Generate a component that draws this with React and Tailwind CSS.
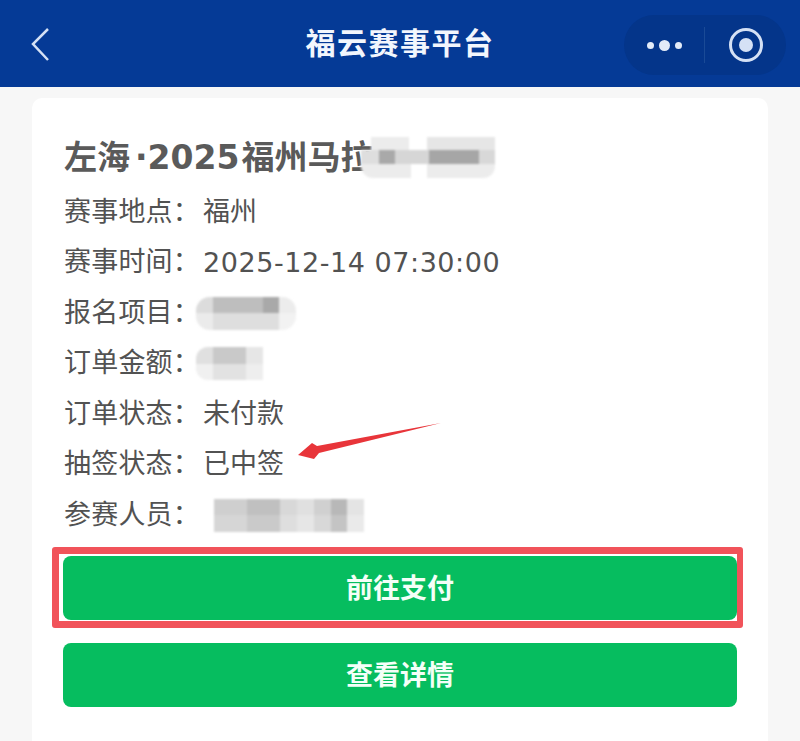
import React from 'react';

const fontStack = 'font-["Liberation_Sans","Noto_Sans_CJK_SC",sans-serif]';

// one mosaic cell of a blurred-out value
const Cell = ({ w, c }) => <div className="h-full" style={{ width: w, background: c }} />;

const Mosaic = ({ rows, className }) => (
  <div className={`flex flex-col overflow-hidden blur-[1px] ${className}`}>
    {rows.map((row, r) => (
      <div key={r} className="flex flex-1">
        {row.map(([w, c], i) => <Cell key={i} w={w} c={c} />)}
      </div>
    ))}
  </div>
);

const Row = ({ label, children }) => (
  <div className="flex h-[50.5px] items-center text-[27px] leading-none text-[#525252]">
    <span className="w-[139px] shrink-0 tracking-[0.2px]">{label}：</span>
    {children}
  </div>
);

const Button = ({ children }) => (
  <div className="flex h-[64px] w-[674px] shrink-0 items-center justify-center rounded-[8px] bg-[#06bd5f] pt-[4px] text-[27px] font-bold text-[#f4fff8]">
    {children}
  </div>
);

export default function App() {
  return (
    <div className={`h-[741px] w-[800px] overflow-hidden bg-[#f7f7f7] ${fontStack}`}>
      <header className="relative flex h-[87px] items-center justify-center bg-[#053a96]">
        <svg className="absolute left-[28px] top-[27px]" width="24" height="36" viewBox="0 0 24 36" fill="none">
          <path d="M20 2 L5 17 L20 33" stroke="#d5e1f5" strokeWidth="2.5" />
        </svg>
        <h1 className="text-[30px] font-bold tracking-[1.5px] text-[#f2f6fd]">福云赛事平台</h1>
        <div className="absolute left-[624px] top-[15px] flex h-[60px] w-[162px] items-center rounded-full bg-[#04358a]">
          <div className="flex w-[80px] items-center justify-center gap-[5px]">
            <span className="size-[7px] rounded-full bg-[#e3ebf8]" />
            <span className="size-[11px] rounded-full bg-[#e3ebf8]" />
            <span className="size-[7px] rounded-full bg-[#e3ebf8]" />
          </div>
          <div className="h-[36px] w-px bg-[#1a4a96]" />
          <div className="flex flex-1 items-center justify-center pl-[1px]">
            <div className="flex size-[34px] items-center justify-center rounded-full border-[3px] border-[#d5e1f5]">
              <span className="size-[14px] rounded-full bg-[#d5e1f5]" />
            </div>
          </div>
        </div>
      </header>

      <main className="relative mx-[32px] mt-[11px] h-[643px] rounded-t-[10px] bg-white pl-[32px] pt-[34px]">
        <div className="flex h-[50px] items-center text-[33px] font-bold leading-none text-[#5a5a5a]">
          <span>左海</span>
          <span className="ml-[5px] mr-[2px] font-['DejaVu_Sans']">·2025</span>
          <span>福州马拉</span>
          <Mosaic
            className="-ml-[12px] h-[41px] w-[134px] rounded-b-[12px]"
            rows={[
              [[10, 'transparent'], [38, '#ececec'], [18, 'transparent'], [68, '#e6e6e6']],
              [[18, '#dedede'], [16, '#a9a9a9'], [34, '#d6d6d6'], [50, '#a6a6a6'], [16, '#d8d8d8']],
              [[50, '#ececec'], [16, 'transparent'], [68, '#ececec']],
            ]}
          />
        </div>

        <div className="mt-[5px]">
          <Row label="赛事地点">福州</Row>
          <Row label="赛事时间"><span className="font-['DejaVu_Sans'] tracking-[0.55px]">2025-12-14 07:30:00</span></Row>
          <Row label="报名项目">
            <Mosaic
              className="-ml-[7px] h-[33px] w-[100px] rounded-[14px]"
              rows={[
                [[17, '#dcdcdc'], [50, '#bebebe'], [16, '#a9a9a9'], [17, '#ececec']],
                [[17, '#ebebeb'], [66, '#dedede'], [17, '#f2f2f2']],
              ]}
            />
          </Row>
          <Row label="订单金额">
            <Mosaic
              className="-ml-[7px] h-[33px] w-[67px] rounded-l-[12px]"
              rows={[
                [[17, '#e0e0e0'], [33, '#c9c9c9'], [17, '#e6e6e6']],
                [[17, '#f0f0f0'], [33, '#e2e2e2'], [17, '#eeeeee']],
              ]}
            />
          </Row>
          <Row label="订单状态">未付款</Row>
          <Row label="抽签状态">已中签</Row>
          <Row label="参赛人员">
            <Mosaic
              className="ml-[11px] h-[33px] w-[150px]"
              rows={[
                [[33, '#cfcfcf'], [33, '#c0c0c0'], [17, '#d8d8d8'], [17, '#e0e0e0'], [17, '#d0d0d0'], [16, '#b8b8b8'], [17, '#e4e4e4']],
                [[33, '#d6d6d6'], [33, '#cacaca'], [17, '#dedede'], [17, '#e6e6e6'], [17, '#d8d8d8'], [16, '#c4c4c4'], [17, '#eaeaea']],
              ]}
            />
          </Row>
        </div>

        <div className="-ml-[12px] mt-[6px] flex h-[81px] w-[691px] items-start justify-end rounded-[3px] border-[7px] border-r-[6px] border-[#f1535a] pt-[2px]">
          <Button>前往支付</Button>
        </div>
        <div className="-ml-[1px] mt-[15px]">
          <Button>查看详情</Button>
        </div>

        {/* red arrow annotation */}
        <svg className="absolute left-[264px] top-[325px]" width="150" height="40" viewBox="0 0 150 40">
          <polygon points="145,0 21,23 16,20 2,32 18,36 23,30" fill="#e8353a" />
        </svg>
      </main>
    </div>
  );
}
